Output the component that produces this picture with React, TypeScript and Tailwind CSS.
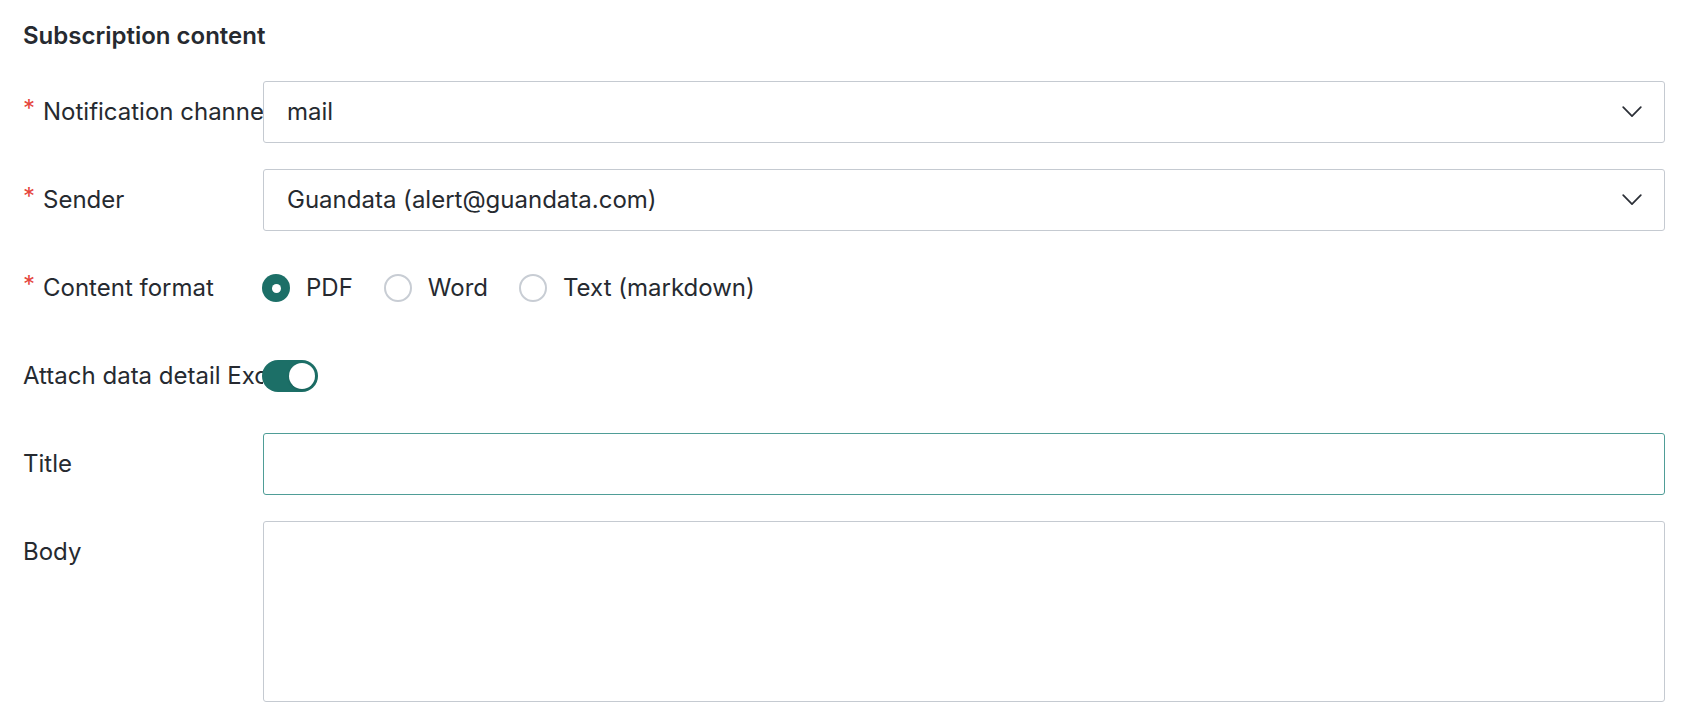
import React, { useState } from 'react';

type Format = 'pdf' | 'word' | 'text';

const Chevron: React.FC = () => (
  <svg width="20" height="12" viewBox="0 0 20 12" fill="none" className="shrink-0">
    <path d="M1.2 1.2L10 10.2L18.8 1.2" stroke="#2b2f36" strokeWidth="1.7" strokeLinecap="round" strokeLinejoin="round" />
  </svg>
);

const FieldRow: React.FC<{ label: string; required?: boolean; children: React.ReactNode }> = ({ label, required, children }) => (
  <div className="flex items-start">
    <div className="w-[240px] shrink-0 h-[62px] flex items-center overflow-hidden whitespace-nowrap">
      {required && <span className="text-[#e5463d] text-[24px] w-[20px] shrink-0 -mt-[6px]">*</span>}
      <span>{label}</span>
    </div>
    <div className="flex-1 min-w-0">{children}</div>
  </div>
);

const SelectBox: React.FC<{ value: string }> = ({ value }) => (
  <div className="h-[62px] bg-white border border-[#c5cad1] rounded-[3px] flex items-center justify-between pl-[23px] pr-[22px] cursor-pointer">
    <span>{value}</span>
    <Chevron />
  </div>
);

const Radio: React.FC<{ checked: boolean; label: string; onClick: () => void }> = ({ checked, label, onClick }) => (
  <button type="button" onClick={onClick} className="flex items-center gap-[16px] mr-[31px]">
    {checked ? (
      <span className="w-[28px] h-[28px] rounded-full bg-[#1c6f67] flex items-center justify-center">
        <span className="w-[9px] h-[9px] rounded-full bg-white" />
      </span>
    ) : (
      <span className="w-[28px] h-[28px] rounded-full border-2 border-[#c8cdd4] bg-white" />
    )}
    <span>{label}</span>
  </button>
);

export default function App() {
  const [format, setFormat] = useState<Format>('pdf');
  const [attach, setAttach] = useState(true);
  const [title, setTitle] = useState('');
  const [body, setBody] = useState('');

  return (
    <div className="min-h-screen bg-white text-[#262a30] text-[24px] font-['Inter','Noto_Sans',sans-serif] pl-[23px] pr-[17px] pt-[21px]">
      <h2 className="text-[24px] font-semibold leading-[30px] mb-[30px]">Subscription content</h2>

      <div className="flex flex-col gap-[26px]">
        <FieldRow label="Notification channel" required>
          <SelectBox value="mail" />
        </FieldRow>

        <FieldRow label="Sender" required>
          <SelectBox value="Guandata (alert@guandata.com)" />
        </FieldRow>

        <FieldRow label="Content format" required>
          <div className="h-[62px] flex items-center -ml-[1px]">
            <Radio checked={format === 'pdf'} label="PDF" onClick={() => setFormat('pdf')} />
            <Radio checked={format === 'word'} label="Word" onClick={() => setFormat('word')} />
            <Radio checked={format === 'text'} label="Text (markdown)" onClick={() => setFormat('text')} />
          </div>
        </FieldRow>

        <FieldRow label="Attach data detail Excel">
          <div className="h-[62px] flex items-center -ml-[1px]">
            <button
              type="button"
              onClick={() => setAttach(!attach)}
              className={`w-[56px] h-[32px] rounded-full flex items-center px-[3px] ${attach ? 'bg-[#1c6f67] justify-end' : 'bg-[#c5cad1] justify-start'}`}
            >
              <span className="w-[26px] h-[26px] rounded-full bg-white shadow-sm" />
            </button>
          </div>
        </FieldRow>

        <FieldRow label="Title">
          <input
            value={title}
            onChange={(e) => setTitle(e.target.value)}
            className="w-full h-[62px] border border-[#4f9d97] rounded-[3px] px-[23px] outline-none"
          />
        </FieldRow>

        <FieldRow label="Body">
          <textarea
            value={body}
            onChange={(e) => setBody(e.target.value)}
            className="block w-full h-[181px] border border-[#c5cad1] rounded-[3px] px-[23px] py-[14px] outline-none resize-none"
          />
        </FieldRow>
      </div>
    </div>
  );
}
